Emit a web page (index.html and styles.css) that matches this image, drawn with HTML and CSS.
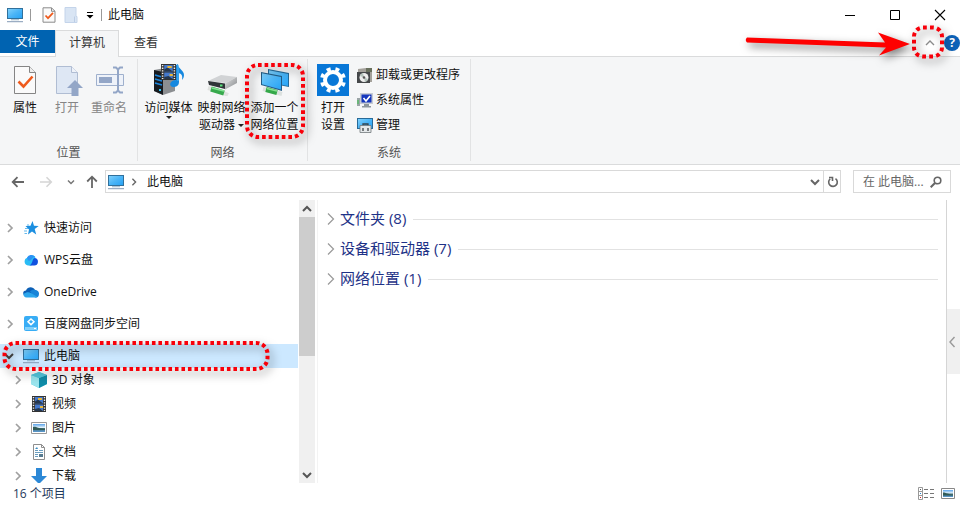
FILE: index.html
```html
<!DOCTYPE html>
<html lang="zh-CN">
<head>
  <meta charset="UTF-8">
  <meta name="viewport" content="width=device-width, initial-scale=1.0">
  <title>此电脑</title>
  <link rel="stylesheet" href="styles.css">
</head>
<body>
  <!-- shared icons -->
  <svg class="defs" width="0" height="0" aria-hidden="true">
    <defs>
      <linearGradient id="screen" x1="0" y1="0" x2="1" y2="1">
        <stop offset="0" stop-color="#7fd0fb"/>
        <stop offset="0.5" stop-color="#4bb5f7"/>
        <stop offset="1" stop-color="#27a3f5"/>
      </linearGradient>
      <linearGradient id="metal" x1="0" y1="0" x2="1" y2="1">
        <stop offset="0" stop-color="#e2e3e4"/>
        <stop offset="1" stop-color="#85888b"/>
      </linearGradient>
      <linearGradient id="photo" x1="0" y1="0" x2="0" y2="1">
        <stop offset="0" stop-color="#5aa3ea"/>
        <stop offset="0.45" stop-color="#e5f3fb"/>
        <stop offset="0.55" stop-color="#476f73"/>
        <stop offset="1" stop-color="#5c9bd4"/>
      </linearGradient>
    </defs>
    <symbol id="pc" viewBox="0 0 16 16">
      <path d="M0 1h16v11H0z" fill="#31709b"/>
      <path d="M1 2h14v9H1z" fill="url(#screen)"/>
      <path d="M4 12.4h8v.8H4z" fill="#7d9fb8"/>
      <path d="M0 14.2h16v1H0z" fill="#8299b4"/>
    </symbol>
    <symbol id="chevron" viewBox="0 0 8 10">
      <path d="M2 1l4 4-4 4" fill="none" stroke="currentColor" stroke-width="1.7"/>
    </symbol>
    <symbol id="chevron-down" viewBox="0 0 10 8">
      <path d="M1 2l4 4 4-4" fill="none" stroke="currentColor" stroke-width="2"/>
    </symbol>
    <symbol id="film" viewBox="0 0 14 16">
      <path d="M0 0h14v16H0z" fill="#333"/>
      <path d="M1.5 1v14M12.5 1v14" stroke="#eee" stroke-width="1.4" stroke-dasharray="1.3 1.3"/>
      <path d="M3 1h8v6.5H3zM3 8.5h8V15H3z" fill="#4478cc"/>
      <path d="M3 5.5l3-2 5 4H3zM3 13l4-1 4 3H3z" fill="#26374d"/>
      <path d="M6 2h4v2H6zM8 10h3v2H8z" fill="#e9b637"/>
    </symbol>
  </svg>

  <header class="titlebar">
    <svg class="icon" width="16" height="16"><use href="#pc"/></svg>
    <span class="sep"></span>
    <button class="quick" aria-label="属性">
      <svg width="14" height="16" viewBox="0 0 14 16">
        <path d="M1 .8h8.5L13 4.2v11H1z" fill="#fafafa" stroke="#8b8b8b"/>
        <path d="M9.5 1v3.3H13" fill="none" stroke="#8b8b8b"/>
        <path d="M3.5 8.5l2.5 2.7 5-5.4" fill="none" stroke="#ee5a1c" stroke-width="1.7"/>
      </svg>
    </button>
    <button class="quick" aria-label="新建文件夹">
      <svg width="14" height="16" viewBox="0 0 14 16">
        <path d="M1 .5h11v9h1v6H1z" fill="#d9e5f4" stroke="#c4d4ea"/>
        <path d="M10.5 15V9.5" stroke="#bccde5"/>
      </svg>
    </button>
    <button class="quick customize" aria-label="自定义快速访问工具栏">
      <svg width="8" height="8" viewBox="0 0 8 8">
        <path d="M1 1.5h6" stroke="#000"/>
        <path d="M.5 4h7L4 7.5z"/>
      </svg>
    </button>
    <span class="sep"></span>
    <h1 class="title">此电脑</h1>
    <div class="window-controls">
      <button aria-label="最小化"><svg width="12" height="12" viewBox="0 0 12 12"><path d="M1 6.5h10" stroke="#000"/></svg></button>
      <button aria-label="最大化"><svg width="12" height="12" viewBox="0 0 12 12"><path d="M1.5 1.5h9v9h-9z" fill="none" stroke="#000"/></svg></button>
      <button aria-label="关闭"><svg width="12" height="12" viewBox="0 0 12 12"><path d="M1 1l10 10M11 1L1 11" stroke="#000" stroke-width="1.1"/></svg></button>
    </div>
  </header>

  <nav class="tabs">
    <button class="tab file">文件</button>
    <button class="tab active">计算机</button>
    <button class="tab">查看</button>
    <div class="tabs-right">
      <button class="collapse" aria-label="最小化功能区">
        <svg width="10" height="8" viewBox="0 0 10 8"><path d="M1 6l4-4 4 4" fill="none" stroke="#8c8c8c" stroke-width="1.4"/></svg>
        <svg class="mark" width="40" height="40" viewBox="0 0 40 40">
          <rect x="4" y="4.500" width="28" height="29" rx="9" pathLength="98" stroke-dasharray="3.8 3.2"/>
        </svg>
        <svg class="arrow" width="180" height="36" viewBox="0 0 180 36">
          <path d="M8 12.500Q5.500 15 8 17.500l139 5-7 8L171 19 139 7.500l7 10z" fill="#fe0000"/>
        </svg>
      </button>
      <button class="help" aria-label="帮助">?</button>
    </div>
  </nav>

  <section class="ribbon">
    <div class="group">
      <div class="tools place">
        <button class="tool">
          <svg width="32" height="32" viewBox="0 0 32 32">
            <path d="M5.5 2.500h15l6 6v21h-21z" fill="#fafafa" stroke="#858585"/>
            <path d="M20.5 2.500v6h6" fill="#eee" stroke="#858585"/>
            <path d="M9.500 17.500l5 5 9-10" fill="none" stroke="#ee5a1c" stroke-width="2.6"/>
          </svg>
          <span>属性</span>
        </button>
        <button class="tool" disabled>
          <svg width="32" height="32" viewBox="0 0 32 32">
            <path d="M5.500 2.500h15l6 6v21h-21z" fill="#dee7f4" stroke="#b0bdd3"/>
            <path d="M20.500 2.500v6h6" fill="#eef2f9" stroke="#b0bdd3"/>
            <path d="M24 16l8 8h-4.500v8h-7v-8H16z" fill="#93a6c7"/>
          </svg>
          <span>打开</span>
        </button>
        <button class="tool" disabled>
          <svg width="32" height="32" viewBox="0 0 32 32">
            <path d="M3.500 10.500h27v11h-27z" fill="#eef2f9" stroke="#9fb0cd"/>
            <path d="M6 13h13v6H6z" fill="#93a6c7"/>
            <path d="M20 3.500h3l2 2 2-2h3M20 28.500h3l2-2 2 2h3M25 5v22" fill="none" stroke="#93a6c7" stroke-width="2"/>
          </svg>
          <span>重命名</span>
        </button>
      </div>
      <div class="group-name">位置</div>
    </div>

    <div class="group">
      <div class="tools network">
        <button class="tool">
          <svg width="32" height="32" viewBox="0 0 32 32">
            <path d="M1 6l11-2 10 3v20l-12 4-9-4z" fill="#8b8e91"/>
            <path d="M1 6l9 2v23l-9-4z" fill="#171b20"/>
            <path d="M2 11l7 2M2 15l7 2M2 19l7 2" stroke="#1c86dd" stroke-width="1.4"/>
            <path d="M6 25h2v2H6z" fill="#35c6f5"/>
            <svg x="8" y="0" width="15" height="16" viewBox="0 0 14 16" preserveAspectRatio="none"><use href="#film" width="14" height="16"/></svg>
            <path d="M25 0c0 5 6 6 6 11 0 2-1 4-2 5 1-5-1-6-3-7v9c0 4-3 5-6 5-5-1-3-7 3-7V1z" fill="#1688df"/>
            <path d="M25 1v16" stroke="#50baf5"/>
          </svg>
          <span>访问媒体</span>
          <i class="drop"></i>
        </button>
        <button class="tool">
          <svg width="32" height="32" viewBox="0 0 32 32">
            <path d="M2 24l11 3 9 4" fill="none" stroke="#dfe2df" stroke-width="4"/>
            <path d="M5 25l13 4" stroke="#37a94d" stroke-width="5"/>
            <path d="M6 24l12 3" stroke="#84e394" stroke-width="1.5"/>
            <path d="M2 17l13-6 16 2-11 6z" fill="#d1d3d5"/>
            <path d="M2 17l17 2.500V25L3 21z" fill="#303438"/>
            <path d="M19 19.500L31 13v6l-12 6.500z" fill="url(#metal)"/>
            <path d="M14 20.500h2.500v2H14z" fill="#56e57c"/>
          </svg>
          <span>映射网络<br>驱动器<i class="drop"></i></span>
        </button>
        <button class="tool">
          <svg width="32" height="32" viewBox="0 0 32 32">
            <path d="M9 5l21 4v14l-21-4z" fill="#246b9b"/>
            <path d="M10 6.200l19 3.800v12l-19-4z" fill="url(#screen)"/>
            <path d="M4 25l19 5" stroke="#dce1df" stroke-width="4"/>
            <path d="M7 25.500l11 3" stroke="#34a849" stroke-width="5"/>
            <path d="M8 24.500l10 2.500" stroke="#86e08f" stroke-width="1.4"/>
            <path d="M2 8l21 4v15L2 21z" fill="#245e87"/>
            <path d="M3 9.300L22 13v12.500L3 20.300z" fill="url(#screen)"/>
          </svg>
          <span>添加一个<br>网络位置</span>
          <svg class="mark" width="68" height="84" viewBox="0 0 68 84">
            <rect x="6" y="2" width="56" height="72" rx="11" pathLength="234" stroke-dasharray="3.6 2.9"/>
          </svg>
        </button>
      </div>
      <div class="group-name">网络</div>
    </div>

    <div class="group">
      <div class="tools system">
        <button class="tool">
          <svg width="32" height="32" viewBox="0 0 32 32">
            <path d="M0 0h32v32H0z" fill="#0877d7"/>
            <circle cx="16" cy="16" r="8" fill="none" stroke="#fff" stroke-width="4"/>
            <circle cx="16" cy="16" r="11" fill="none" stroke="#fff" stroke-width="4" pathLength="80" stroke-dasharray="4.6 5.4" stroke-dashoffset="2.3" transform="rotate(22.5 16 16)"/>
          </svg>
          <span>打开<br>设置</span>
        </button>
        <div class="small-tools">
          <button class="small-tool">
            <svg width="16" height="16" viewBox="0 0 16 16">
              <path d="M1 2l8-1 6 2v12H1z" fill="#a4a19b"/>
              <path d="M9 1h6v4H9z" fill="#68705d"/>
              <path d="M0 5h13v11H0z" fill="#45484a"/>
              <circle cx="7" cy="10.5" r="4.5" fill="#eee"/>
              <path d="M7 10.500L3 9a4.500 4.500 0 013-3zM7 10.500l4 1.500a4.500 4.500 0 01-3 3z" fill="#b5c4bd"/>
              <circle cx="7" cy="10.5" r="1.3" fill="#555"/>
            </svg>
            卸载或更改程序
          </button>
          <button class="small-tool">
            <svg width="16" height="16" viewBox="0 0 16 16">
              <path d="M0 6h3v8H0z" fill="#9ba5a6"/>
              <path d="M1 8v4" stroke="#38c74c"/>
              <path d="M3 1h13v11H3z" fill="#c7ccd4"/>
              <path d="M4.500 2.500h10v8h-10z" fill="#1436bd"/>
              <path d="M6.500 6l2.500 3 4-5" fill="none" stroke="#fff" stroke-width="1.6"/>
              <path d="M7 12h5v2H7zM5 14h9v1.500H5z" fill="#8e979d"/>
            </svg>
            系统属性
          </button>
          <button class="small-tool">
            <svg width="16" height="16" viewBox="0 0 16 16">
              <path d="M0 1h16v11H0z" fill="#286a98"/>
              <path d="M1 2h14v9H1z" fill="url(#screen)"/>
              <path d="M6 9V7h5v2" fill="none" stroke="#33434e" stroke-width="1.3"/>
              <path d="M3 8.500h11v7H3z" fill="#e4e8ea" stroke="#71787c" stroke-width=".8"/>
              <path d="M6 11v3M11 11v3" stroke="#303438" stroke-width="1.2"/>
            </svg>
            管理
          </button>
        </div>
      </div>
      <div class="group-name">系统</div>
    </div>
  </section>

  <div class="addressbar">
    <div class="nav-buttons">
      <button aria-label="后退"><svg width="14" height="12" viewBox="0 0 14 12"><path d="M13 6H2M6.500 1.200L1.700 6l4.800 4.800" fill="none" stroke="#666" stroke-width="1.8"/></svg></button>
      <button aria-label="前进" disabled><svg width="14" height="12" viewBox="0 0 14 12"><path d="M1 6h11M7.500 1.200L12.300 6l-4.800 4.800" fill="none" stroke="#d5d5d5" stroke-width="1.6"/></svg></button>
      <button class="recent" aria-label="最近浏览的位置"><svg width="8" height="6"><use href="#chevron-down"/></svg></button>
      <button aria-label="上移"><svg width="12" height="14" viewBox="0 0 12 14"><path d="M6 13V2M1.200 6.500L6 1.700l4.800 4.800" fill="none" stroke="#666" stroke-width="1.8"/></svg></button>
    </div>
    <div class="address">
      <svg width="16" height="16"><use href="#pc"/></svg>
      <svg class="crumb-arrow" width="8" height="8"><use href="#chevron"/></svg>
      <a class="crumb" href="#">此电脑</a>
      <button class="history" aria-label="以前的位置"><svg width="10" height="8"><use href="#chevron-down"/></svg></button>
      <button class="refresh" aria-label="刷新">
        <svg width="12" height="12" viewBox="0 0 12 12"><path d="M8.500 2.600A4.300 4.300 0 113.200 2.800M2 1.500h3.500V5" fill="none" stroke="#666" stroke-width="1.6"/></svg>
      </button>
    </div>
    <label class="search">
      <input type="text" placeholder="在 此电脑..." aria-label="搜索">
      <svg width="12" height="12" viewBox="0 0 12 12"><circle cx="7.5" cy="4.5" r="3.300" fill="none" stroke="#666" stroke-width="1.6"/><path d="M5 7l-4.300 4.300" stroke="#666" stroke-width="2"/></svg>
    </label>
  </div>

  <main class="main">
    <nav class="sidebar">
      <ul class="tree">
        <li>
          <button class="node"><svg class="chev" width="8" height="10"><use href="#chevron"/></svg>
            <svg width="16" height="16" viewBox="0 0 16 16"><path d="M9.500 1l1.500 4.800 4.700.2-4 3 1.500 5.500-4.200-3L5 14.500l1-5L2.500 6l5-.2z" fill="#1c8fe0"/><path d="M2 8.500h3M1 11h3M1.500 13.500H4M4 5h2" stroke="#65b9ed" stroke-width="1.2"/></svg>
            <span>快速访问</span></button>
        </li>
        <li>
          <button class="node"><svg class="chev" width="8" height="10"><use href="#chevron"/></svg>
            <svg width="16" height="16" viewBox="0 0 16 16"><path d="M5 13.500a4 4 0 01-.5-7.800 5 5 0 018-.8l-4 8.600z" fill="#29bcf5"/><path d="M11 13.500H6c4-1 3-7.500 6-7.500a3.800 3.800 0 01-1 7.500z" fill="#1051df"/><path d="M4 5.500a5 5 0 018-1c-4 1-3 5-7 4z" fill="#2b91f5"/></svg>
            <span>WPS云盘</span></button>
        </li>
        <li>
          <button class="node"><svg class="chev" width="8" height="10"><use href="#chevron"/></svg>
            <svg width="16" height="16" viewBox="0 0 16 16"><path d="M3 12.500C-1 11-.5 6.500 3 6.500c1.500-4 7-4.500 9-.5l-2 6z" fill="#0c5fb5"/><path d="M7 7.500c2-3 9-2 9 2s-2 4-4 4z" fill="#1784d8"/><path d="M3.500 13.500c-2 0-3.500-2-3-3.500C3 8 6 8 8 9l6.500 4-1.500.5z" fill="#2ba6ec"/></svg>
            <span>OneDrive</span></button>
        </li>
        <li>
          <button class="node"><svg class="chev" width="8" height="10"><use href="#chevron"/></svg>
            <svg width="16" height="16" viewBox="0 0 16 16"><rect x="1" y="0" width="14" height="15" rx="2" fill="#38adf5"/><path d="M2 11h12v3H2z" fill="#81d0fa"/><path d="M8 3l3 2.800L8 8.600 5 5.800z" fill="none" stroke="#fff" stroke-width="1.5"/><path d="M11 12.500h2" stroke="#fff"/></svg>
            <span>百度网盘同步空间</span></button>
        </li>
        <li>
          <button class="node selected" aria-expanded="true"><svg class="chev open" width="10" height="8"><use href="#chevron-down"/></svg>
            <svg width="16" height="16"><use href="#pc"/></svg>
            <span>此电脑</span>
            <svg class="mark" width="276" height="42" viewBox="0 0 276 42">
              <rect x="4.500" y="5" width="263" height="26" rx="11" pathLength="559" stroke-dasharray="3.6 2.9"/>
            </svg>
          </button>
          <ul class="subtree">
            <li><button class="node"><svg class="chev" width="8" height="10"><use href="#chevron"/></svg>
              <svg width="16" height="16" viewBox="0 0 16 16"><path d="M8 0l8 3v9l-8 4-8-4V3z" fill="#49c3dc"/><path d="M0 3l8 3v10l-8-4z" fill="#9be5ee"/><path d="M8 6l8-3v9l-8 4z" fill="#108ca8"/><path d="M8 0l8 3-8 3-8-3z" fill="#54c8dd"/></svg>
              <span>3D 对象</span></button></li>
            <li><button class="node"><svg class="chev" width="8" height="10"><use href="#chevron"/></svg>
              <svg width="16" height="16"><use href="#film"/></svg>
              <span>视频</span></button></li>
            <li><button class="node"><svg class="chev" width="8" height="10"><use href="#chevron"/></svg>
              <svg width="16" height="16" viewBox="0 0 16 16"><path d="M.5 2.500h15v11H.5z" fill="#fff" stroke="#999"/><path d="M2 4h12v8H2z" fill="url(#photo)"/><path d="M2 7c3-1 5 2 12 2v1H2z" fill="#315b57"/></svg>
              <span>图片</span></button></li>
            <li><button class="node"><svg class="chev" width="8" height="10"><use href="#chevron"/></svg>
              <svg width="16" height="16" viewBox="0 0 16 16"><path d="M2.500.5h8l3 3v12h-11z" fill="#fff" stroke="#8e8e8e"/><path d="M10.500.5v3h3" fill="none" stroke="#8e8e8e"/><path d="M4 6.500h3M4 8.500h8M4 10.500h3M4 12.500h3M8 6.500h4" stroke="#6a9dbe"/><path d="M8 10h4v3H8z" fill="#577b90"/><path d="M4 5l2-2 1 2z" fill="#3a8cc1"/></svg>
              <span>文档</span></button></li>
            <li><button class="node"><svg class="chev" width="8" height="10"><use href="#chevron"/></svg>
              <svg width="16" height="16" viewBox="0 0 16 16"><path d="M5 0h6v8h5l-8 8-8-8h5z" fill="#2c88d6"/></svg>
              <span>下载</span></button></li>
          </ul>
        </li>
      </ul>
      <div class="scrollbar">
        <button aria-label="向上滚动"><svg class="flip" width="10" height="8"><use href="#chevron-down"/></svg></button>
        <div class="track"><div class="thumb"></div></div>
        <button aria-label="向下滚动"><svg width="10" height="8"><use href="#chevron-down"/></svg></button>
      </div>
    </nav>

    <section class="content">
      <button class="section-title"><svg width="8" height="14" viewBox="0 0 8 14"><path d="M1 1.500L6.500 7 1 12.500" fill="none" stroke="#999" stroke-width="1.2"/></svg><span>文件夹 (8)</span></button>
      <button class="section-title"><svg width="8" height="14" viewBox="0 0 8 14"><path d="M1 1.500L6.500 7 1 12.500" fill="none" stroke="#999" stroke-width="1.2"/></svg><span>设备和驱动器 (7)</span></button>
      <button class="section-title"><svg width="8" height="14" viewBox="0 0 8 14"><path d="M1 1.500L6.500 7 1 12.500" fill="none" stroke="#999" stroke-width="1.2"/></svg><span>网络位置 (1)</span></button>
    </section>

    <aside class="side">
      <button aria-label="展开侧栏"><svg width="8" height="12" viewBox="0 0 8 12"><path d="M6.500 1L2 6l4.500 5" fill="none" stroke="#999" stroke-width="1.4"/></svg></button>
    </aside>
  </main>

  <footer class="status">
    <span>16 个项目</span>
    <div class="views">
      <button aria-label="详细信息">
        <svg width="16" height="14" viewBox="0 0 16 14"><path d="M.5.500h4v12h-4zM.5 4.500h4M.5 8.500h4" fill="#fff" stroke="#999"/><path d="M6 2.500h4M12 2.500h4M6 6.500h4M12 6.500h4M6 10.500h4M12 10.500h4" stroke="#777"/><path d="M2 2.500h1" stroke="#555"/><path d="M2 6.500h1" stroke="#2584d4"/><path d="M2 10.500h1" stroke="#d42525"/></svg>
      </button>
      <button aria-label="大缩略图">
        <svg width="14" height="12" viewBox="0 0 14 12"><path d="M.5.500h13v10H.5z" fill="#fff" stroke="#888"/><path d="M2 2h10v7H2z" fill="url(#photo)"/><path d="M2 4.500c3 0 5 2 10 2v1H2z" fill="#315b57"/></svg>
      </button>
    </div>
  </footer>
</body>
</html>
```
FILE: styles.css
```css
* {
  margin: 0;
  padding: 0;
  box-sizing: border-box;
}
body {
  display: flex;
  flex-direction: column;
  height: 100vh;
  overflow: hidden;
  background: #fff;
  color: #111;
  font: 12px/16px "Open Sans", "Noto Sans CJK SC", sans-serif;
}
button {
  border: 0;
  background: none;
  color: inherit;
  font: inherit;
}
svg {
  display: block;
  flex: none;
}
ul {
  list-style: none;
}
.defs {
  position: absolute;
}

/* 标题栏 */
.titlebar {
  display: flex;
  align-items: center;
  height: 30px;
  padding-left: 7px;
}
.sep {
  width: 1px;
  height: 12px;
  margin: 0 7px;
  background: #999;
}
.quick {
  display: flex;
  margin-left: 4px;
}
.quick + .quick {
  margin-left: 8px;
}
.customize + .sep {
  margin-right: 6px;
}
.title {
  font-size: 12px;
  font-weight: normal;
}
.window-controls {
  display: flex;
  margin-left: auto;
}
.window-controls button {
  display: flex;
  justify-content: center;
  align-items: center;
  width: 45px;
  height: 28px;
}
.window-controls button:last-child {
  justify-content: flex-end;
  width: 43px;
  padding-right: 14px;
}

/* 选项卡 */
.tabs {
  display: flex;
  height: 27px;
  border-bottom: 1px solid #dadbdc;
}
.tab {
  height: 27px;
  padding: 0 15px 2px;
  color: #333;
}
.tab.file {
  height: 23px;
  padding: 0 15px;
  width: 55px;
  background: #0063b1;
  color: #fff;
}
.tab.active {
  width: 64px;
  padding: 0 0 2px;
  border: 1px solid #dadbdc;
  border-bottom: 0;
  background: #f5f6f7;
}
.tabs-right {
  display: flex;
  align-items: center;
  gap: 4px;
  margin-left: auto;
}
.collapse {
  position: relative;
  display: flex;
  justify-content: center;
  align-items: center;
  width: 20px;
  height: 20px;
}
.help {
  width: 16px;
  height: 16px;
  border-radius: 8px;
  background: #0c62b8;
  color: #fff;
  font-weight: bold;
}

/* 红色标注 */
.mark,
.arrow {
  position: absolute;
  top: 50%;
  left: 50%;
  transform: translate(-50%, -50%);
  z-index: 1;
  overflow: visible;
  filter: drop-shadow(3px 4px 4px rgba(0, 0, 0, 0.5));
  pointer-events: none;
}
.mark rect {
  fill: none;
  stroke: #f8000a;
  stroke-width: 4;
}
.arrow {
  left: auto;
  right: 21px;
  transform: translateY(-50%);
}

/* 功能区 */
.ribbon {
  display: flex;
  height: 108px;
  border-bottom: 1px solid #dadbdc;
  background: #f5f6f7;
}
.group {
  display: flex;
  flex-direction: column;
  margin: 2px 0 3px;
  border-right: 1px solid #e2e3e4;
}
.tools {
  display: flex;
  flex: 1;
  padding-top: 5px;
}
.place {
  padding-left: 4px;
  padding-right: 7px;
}
.network {
  padding-left: 4px;
  padding-right: 6px;
}
.system {
  padding-left: 9px;
  padding-right: 10px;
}
.tool {
  position: relative;
  display: flex;
  flex-direction: column;
  align-items: center;
  width: 42px;
  line-height: 17px;
}
.tool > span {
  margin-top: 3px;
  white-space: nowrap;
}
.tool:disabled {
  color: #858585;
}
.network .tool {
  width: 53px;
}
.system .tool {
  width: 32px;
}
.drop {
  display: inline-block;
  border: 3px solid transparent;
  border-top-color: #222;
  border-bottom: 0;
}
.tool span .drop {
  margin-left: 3px;
  vertical-align: middle;
}
.small-tools {
  display: flex;
  flex-direction: column;
  gap: 9px;
  padding: 3px 0 0 8px;
}
.small-tool {
  display: flex;
  align-items: center;
  gap: 3px;
}
.group-name {
  color: #555;
  text-align: center;
}

/* 地址栏 */
.addressbar {
  display: flex;
  align-items: center;
  height: 35px;
  padding: 0 9px 2px 11px;
}
.nav-buttons {
  display: flex;
  align-items: center;
  gap: 14px;
  width: 94px;
  color: #777;
}
.nav-buttons button {
  display: flex;
}
.nav-buttons button:last-child {
  margin-left: -3px;
}
.address {
  display: flex;
  flex: 1;
  align-items: center;
  height: 23px;
  padding-left: 2px;
  border: 1px solid #d9d9d9;
  color: #666;
}
.crumb-arrow {
  margin: 0 9px 0 6px;
}
.crumb {
  color: #111;
  text-decoration: none;
}
.history {
  margin-left: auto;
  padding: 0 3px;
}
.refresh {
  align-self: stretch;
  padding: 0 1px 0 3px;
  border-left: 1px solid #d9d9d9;
}
.search {
  display: flex;
  align-items: center;
  width: 98px;
  height: 23px;
  margin-left: 12px;
  padding: 0 8px 0 9px;
  border: 1px solid #d9d9d9;
}
.search input {
  flex: 1;
  min-width: 0;
  border: 0;
  outline: 0;
  font: inherit;
}
.search input::placeholder {
  color: #666;
  opacity: 1;
}

/* 主区域 */
.main {
  display: flex;
  flex: 1;
  min-height: 0;
}
.sidebar {
  display: flex;
  width: 318px;
  padding-right: 2px;
  border-right: 1px solid #f3f3f3;
}
.tree {
  display: flex;
  flex: 1;
  flex-direction: column;
  gap: 8px;
  padding-top: 16px;
  overflow: hidden;
}
.node {
  position: relative;
  display: flex;
  align-items: center;
  width: 100%;
  height: 24px;
  padding-left: 6px;
  text-align: left;
}
.node span {
  margin-left: 5px;
}
.node .chev {
  margin-right: 9px;
  color: #a0a0a0;
}
.node .chev.open {
  margin-left: -2px;
  color: #444;
}
.subtree .node {
  padding-left: 14px;
}
.selected {
  background: #cce8ff;
}
.selected .mark {
  left: 0;
  top: -6px;
  transform: none;
}
.scrollbar {
  display: flex;
  flex-direction: column;
  width: 16px;
  margin-left: 1px;
  background: #f0f0f0;
}
.scrollbar button {
  display: flex;
  justify-content: center;
  align-items: center;
  height: 17px;
  color: #555;
}
.flip {
  transform: rotate(180deg);
}
.track {
  flex: 1;
}
.thumb {
  height: 56%;
  background: #cdcdcd;
}
.content {
  flex: 1;
  padding: 4px 8px 0 9px;
}
.section-title {
  display: flex;
  align-items: center;
  gap: 5px;
  width: 100%;
  height: 30px;
  color: #1e3287;
  font-size: 15px;
  line-height: 20px;
}
.section-title span {
  padding-bottom: 2px;
}
.section-title::after {
  content: "";
  flex: 1;
  height: 1px;
  margin-left: 2px;
  background: #e2e2e2;
}
.side {
  display: flex;
  align-items: center;
  width: 14px;
  border-left: 1px solid #d5d5d5;
}
.side button {
  width: 13px;
  height: 65px;
  padding-left: 1px;
  background: #f0f0f0;
}

/* 状态栏 */
.status {
  display: flex;
  justify-content: space-between;
  height: 23px;
  padding: 3px 5px 0 13px;
  color: #1e395b;
}
.views {
  display: flex;
  align-items: center;
  gap: 7px;
  height: 16px;
}
```
